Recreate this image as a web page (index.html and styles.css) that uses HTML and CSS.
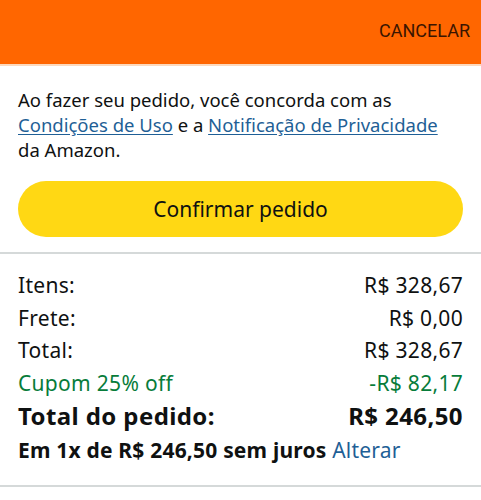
FILE: index.html
```html
<!DOCTYPE html>
<html lang="pt-BR">
<head>
<meta charset="utf-8">
<link rel="stylesheet" href="styles.css">
</head>
<body>
<header class="topbar">
  <span class="cancel">CANCELAR</span>
</header>
<section class="agree">
  <p>Ao fazer seu pedido, você concorda com as <a href="#">Condições de Uso</a> e a <a href="#">Notificação de Privacidade</a> da Amazon.</p>
  <button class="confirm">Confirmar pedido</button>
</section>
<section class="summary">
  <div class="row"><span>Itens:</span><span>R$ 328,67</span></div>
  <div class="row"><span>Frete:</span><span>R$ 0,00</span></div>
  <div class="row"><span>Total:</span><span>R$ 328,67</span></div>
  <div class="row green"><span>Cupom 25% off</span><span>-R$ 82,17</span></div>
  <div class="row big"><span>Total do pedido:</span><span>R$ 246,50</span></div>
  <div class="install"><b>Em 1x de R$ 246,50 sem juros</b> <a href="#">Alterar</a></div>
</section>
</body>
</html>
```
FILE: styles.css
```css
* { box-sizing: border-box; }
html, body { margin: 0; padding: 0; background: #fff; }
body { font-family: "Noto Sans", "Open Sans", sans-serif; color: #0f1111; width: 481px; }
.topbar {
  height: 66px;
  background: #ff6600;
  border-bottom: 2px solid #fcd9bd;
  display: flex;
  align-items: center;
  justify-content: flex-end;
  padding: 0 11px 4px 0;
}
.cancel { font-family: Roboto, sans-serif; font-size: 18px; color: #3b1500; }
.agree { padding: 21px 18px 15px; border-bottom: 2px solid #d5d9d9; }
.agree p { margin: 0; font-size: 18.5px; line-height: 25px; }
.agree a { color: #1f5f96; text-decoration: underline; text-underline-offset: 2px; }
.confirm {
  display: block; width: 100%; height: 56px; margin-top: 19px;
  background: #ffd814; border: 0; border-radius: 28px;
  font-family: inherit; font-size: 21px; color: #0f1111;
}
.summary { padding: 15px 18px 17px; border-bottom: 2px solid #d5d9d9; }
.row { display: flex; justify-content: space-between; font-size: 21px; line-height: 32.5px; letter-spacing: 0.3px; }
.row.green { color: #077c3a; }
.row.big { font-weight: 700; font-size: 24px; line-height: 33px; letter-spacing: 0.4px; }
.install { font-size: 21px; line-height: 36px; letter-spacing: 0.2px; }
.install a { color: #1f5f96; text-decoration: none; }
```
